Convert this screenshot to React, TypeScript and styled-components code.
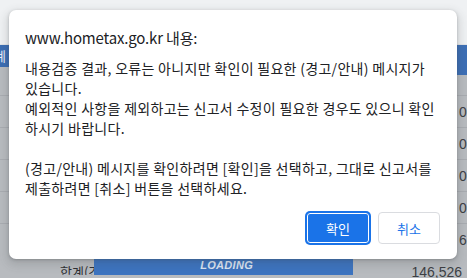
import styled, { createGlobalStyle } from 'styled-components';

const GlobalStyle = createGlobalStyle`
  html, body {
    margin: 0;
    padding: 0;
    background: #b8bbbf;
  }
  body {
    font-family: "Noto Sans CJK KR", "Noto Sans", sans-serif;
  }
`;

const MESSAGE = `내용검증 결과, 오류는 아니지만 확인이 필요한 (경고/안내) 메시지가
있습니다.
예외적인 사항을 제외하고는 신고서 수정이 필요한 경우도 있으니 확인
하시기 바랍니다.

(경고/안내) 메시지를 확인하려면 [확인]을 선택하고, 그대로 신고서를
제출하려면 [취소] 버튼을 선택하세요.`;

const rightValues = ['0', '0', '0', '0', '6'];

const App = () => (
  <>
    <GlobalStyle />
    <Page>
      <TopBand />
      <HeaderRow>
        <HeaderLeft>계</HeaderLeft>
        <HeaderFill />
        <HeaderRight />
      </HeaderRow>
      <Rows>
        <Row $height={29}>
          <RowLeft />
          <RowFill />
          <RowRight $offset={-14}>0</RowRight>
        </Row>
        {rightValues.map((v, i) => (
          <Row key={i} $height={32}>
            <RowLeft />
            <RowFill />
            <RowRight>{v}</RowRight>
          </Row>
        ))}
      </Rows>
      <TotalRow>
        <TotalLabel>합계(건)</TotalLabel>
        <LoadingBar>
          <LoadingText>LOADING</LoadingText>
        </LoadingBar>
        <TotalValue>146,526</TotalValue>
      </TotalRow>

      <Dialog>
        <Title>www.hometax.go.kr 내용:</Title>
        <Message>{MESSAGE}</Message>
        <Actions>
          <Button $primary>확인</Button>
          <Button>취소</Button>
        </Actions>
      </Dialog>
    </Page>
  </>
);

const Page = styled.div`
  position: relative;
  width: 467px;
  height: 278px;
  overflow: hidden;
  background: #b8bbbf;
`;

const TopBand = styled.div`
  height: 45px;
  background: #eff1f3;
  border-bottom: 1px solid #e2e4e7;
  box-sizing: border-box;
`;

const HeaderRow = styled.div`
  display: flex;
  align-items: flex-start;
  height: 22px;
  position: relative;
  z-index: 1;
`;

const HeaderLeft = styled.div`
  width: 30px;
  height: 22px;
  background: #3b6db3;
  color: #e6edf7;
  font-size: 13px;
  line-height: 22px;
  text-indent: -6px;
  overflow: hidden;
`;

const HeaderFill = styled.div`
  flex: 1;
`;

const HeaderRight = styled.div`
  width: 30px;
  height: 30px;
  background: #3d6fb6;
`;

const Rows = styled.div`
  display: flex;
  flex-direction: column;
`;

const Row = styled.div<{ $height: number }>`
  display: flex;
  height: ${({ $height }) => $height}px;
  border-bottom: 1px solid #a9acb1;
  box-sizing: border-box;
  overflow: hidden;
  &:last-child {
    border-bottom: none;
  }
`;

const RowLeft = styled.div`
  width: 30px;
`;

const RowFill = styled.div`
  flex: 1;
`;

const RowRight = styled.div<{ $offset?: number }>`
  width: 30px;
  font-family: "Liberation Sans", sans-serif;
  font-size: 14px;
  line-height: 32px;
  margin-top: ${({ $offset }) => $offset ?? 0}px;
  color: #3c3f44;
  text-indent: 22px;
  overflow: hidden;
`;

const TotalRow = styled.div`
  display: flex;
  align-items: stretch;
  height: 19px;
`;

const TotalLabel = styled.div`
  width: 94px;
  padding-left: 60px;
  box-sizing: border-box;
  font-size: 13px;
  line-height: 13px;
  padding-top: 9px;
  color: #2e3034;
  white-space: nowrap;
  overflow: hidden;
`;

const LoadingBar = styled.div`
  width: 259px;
  background: #3d74c0;
  display: flex;
  justify-content: flex-end;
  padding-right: 100px;
  box-sizing: border-box;
`;

const LoadingText = styled.span`
  font-family: "Liberation Sans", sans-serif;
  font-style: italic;
  font-weight: bold;
  font-size: 11px;
  line-height: 19px;
  color: #dde6f4;
  letter-spacing: 0.3px;
`;

const TotalValue = styled.div`
  flex: 1;
  text-align: right;
  padding-right: 5px;
  font-family: "Liberation Sans", sans-serif;
  font-size: 14px;
  line-height: 14px;
  padding-top: 9px;
  color: #3c3f44;
  white-space: nowrap;
`;

const Dialog = styled.div`
  position: absolute;
  left: 9px;
  top: 10px;
  width: 448px;
  height: 249px;
  box-sizing: border-box;
  background: #fff;
  border-radius: 7px;
  box-shadow: 0 1px 3px rgba(60, 64, 67, 0.3), 0 4px 8px 3px rgba(60, 64, 67, 0.15);
  padding: 17px 17px 15px 16px;
  display: flex;
  flex-direction: column;
  z-index: 2;
`;

const Title = styled.div`
  font-size: 15px;
  line-height: 22px;
  letter-spacing: -0.16px;
  color: #202124;
`;

const Message = styled.div`
  margin-top: 9px;
  font-size: 14px;
  line-height: 20px;
  letter-spacing: 0.3px;
  color: #202124;
  white-space: pre;
`;

const Actions = styled.div`
  margin-top: auto;
  display: flex;
  justify-content: flex-end;
  gap: 8px;
`;

const Button = styled.button<{ $primary?: boolean }>`
  height: 32px;
  padding: 0;
  box-sizing: border-box;
  border-radius: 4px;
  font-family: "Noto Sans CJK KR", sans-serif;
  font-size: 13px;
  font-weight: 400;
  cursor: pointer;
  background: ${({ $primary }) => ($primary ? '#1a73e8' : '#fff')};
  color: ${({ $primary }) => ($primary ? '#fff' : '#1a73e8')};
  border: 1px solid ${({ $primary }) => ($primary ? '#1a73e8' : '#dadce0')};
  box-shadow: ${({ $primary }) => ($primary ? 'inset 0 0 0 1px #fff, 0 0 0 1px #1a73e8' : 'none')};
  width: ${({ $primary }) => ($primary ? '64px' : '62px')};
`;

export default App;
